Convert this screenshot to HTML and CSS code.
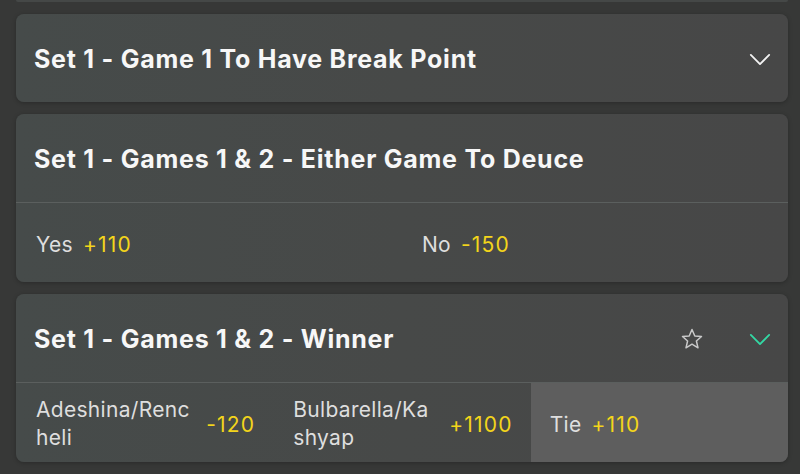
FILE: index.html
```html
<!DOCTYPE html>
<html lang="en">
<head>
    <meta charset="UTF-8">
    <meta name="viewport" content="width=device-width, initial-scale=1.0">
    <title>Set 1 Markets</title>
    <link rel="stylesheet" href="styles.css">
</head>
<body>
    <div class="market-list">
        <div class="card-tail"></div>

        <div class="market">
            <div class="market-header">
                <h2 class="market-title">Set 1 - Game 1 To Have Break Point</h2>
                <div class="header-icons">
                    <svg class="chevron" viewBox="0 0 24 14" width="22" height="13">
                        <polyline points="2,2 12,12 22,2" fill="none" stroke="currentColor" stroke-width="2" stroke-linecap="round" stroke-linejoin="round"/>
                    </svg>
                </div>
            </div>
        </div>

        <div class="market">
            <div class="market-header">
                <h2 class="market-title">Set 1 - Games 1 &amp; 2 - Either Game To Deuce</h2>
            </div>
            <div class="outcomes outcomes-2">
                <div class="outcome">
                    <span class="outcome-name">Yes</span>
                    <span class="odds">+110</span>
                </div>
                <div class="outcome">
                    <span class="outcome-name">No</span>
                    <span class="odds">-150</span>
                </div>
            </div>
        </div>

        <div class="market">
            <div class="market-header">
                <h2 class="market-title">Set 1 - Games 1 &amp; 2 - Winner</h2>
                <div class="header-icons">
                    <svg class="star" viewBox="0 0 24 24" width="24" height="24">
                        <polygon points="12,2.5 14.8,9 21.5,9.5 16.4,14 18,20.8 12,17.2 6,20.8 7.6,14 2.5,9.5 9.2,9" fill="none" stroke="currentColor" stroke-width="1.5" stroke-linejoin="round"/>
                    </svg>
                    <svg class="chevron chevron-open" viewBox="0 0 24 14" width="22" height="13">
                        <polyline points="2,2 12,12 22,2" fill="none" stroke="currentColor" stroke-width="2" stroke-linecap="round" stroke-linejoin="round"/>
                    </svg>
                </div>
            </div>
            <div class="outcomes outcomes-3">
                <div class="outcome spread">
                    <span class="outcome-name wrap">Adeshina/Rencheli</span>
                    <span class="odds">-120</span>
                </div>
                <div class="outcome spread">
                    <span class="outcome-name wrap">Bulbarella/Kashyap</span>
                    <span class="odds">+1100</span>
                </div>
                <div class="outcome selected">
                    <span class="outcome-name">Tie</span>
                    <span class="odds">+110</span>
                </div>
            </div>
        </div>
    </div>
</body>
</html>
```

FILE: styles.css
```css
* {
    margin: 0;
    padding: 0;
    box-sizing: border-box;
}

body {
    font-family: Inter, 'Noto Sans', Arial, sans-serif;
    background: #373837;
    color: #ffffff;
    width: 800px;
    height: 474px;
    overflow: hidden;
}

.market-list {
    display: flex;
    flex-direction: column;
    gap: 12px;
    padding: 0 12px 0 16px;
}

.card-tail {
    height: 2px;
    background: #454847;
    border-radius: 0 0 8px 8px;
}

.market {
    background: linear-gradient(90deg, #464b4a 0%, #474948 50%, #474747 100%);
    border-radius: 8px;
    overflow: hidden;
    box-shadow: 0 1px 4px rgba(0,0,0,0.25);
}

.market-header {
    height: 88px;
    display: flex;
    align-items: center;
    justify-content: space-between;
    padding: 2px 17px 0 18px;
}

.market-title {
    font-size: 25px;
    font-weight: 700;
    letter-spacing: 0.75px;
    color: #f7f7f7;
}

.header-icons {
    display: flex;
    align-items: center;
    gap: 45px;
}

.chevron {
    color: #f2f2f2;
    display: block;
}

.chevron-open {
    color: #33d8a4;
}

.star {
    color: #c9c9c9;
    display: block;
}

.outcomes {
    display: grid;
    border-top: 1px solid #5b5f5e;
    height: 80px;
}

.outcomes-2 {
    grid-template-columns: 1fr 1fr;
}

.outcomes-3 {
    grid-template-columns: 1fr 1fr 1fr;
}

.outcome {
    display: flex;
    align-items: center;
    gap: 10px;
    padding: 3px 20px 0;
    font-size: 21px;
    letter-spacing: 0.3px;
}

.outcome.spread {
    justify-content: space-between;
    gap: 13px;
    padding-right: 18px;
}

.outcome.selected {
    background: #5e5e5e;
    padding-left: 19px;
}

.outcome-name {
    color: #dedede;
}

.outcome-name.wrap {
    word-break: break-all;
    line-height: 28px;
}

.odds {
    color: #f3d51b;
    flex: none;
    letter-spacing: 1.2px;
}
```
